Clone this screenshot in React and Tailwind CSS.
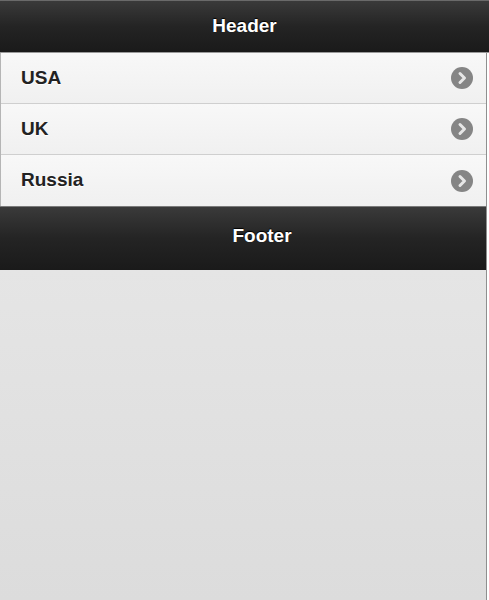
import { useState } from 'react';

const countries = ['USA', 'UK', 'Russia'];

function ArrowIcon() {
  return (
    <svg width="22" height="22" viewBox="0 0 22 22">
      <circle cx="11" cy="11" r="11" fill="#858585" />
      <path d="M9 6.5 L13.5 11 L9 15.5" fill="none" stroke="#e6e6e6" strokeWidth="3" strokeLinecap="round" strokeLinejoin="round" />
    </svg>
  );
}

export default function App() {
  const [selected, setSelected] = useState(null);

  return (
    <div className="min-h-[600px] w-full flex flex-col font-['Liberation_Sans',Arial,sans-serif]">
      <header className="h-[53px] flex items-center justify-center border-t border-[#6a6a6a] border-b border-b-[#9a9a9a] bg-gradient-to-b from-[#3a3a3a] via-[#242424] to-[#1a1a1a]">
        <h1 className="text-[19px] font-bold text-white [text-shadow:0_-1px_1px_#000]">Header</h1>
      </header>
      <div className="flex-1 flex flex-col w-[487px] border-r border-[#8f8f8f] bg-gradient-to-b from-[#ebebeb] to-[#dcdcdc]">
        <ul className="border-l border-[#b5b5b5]">
          {countries.map((c) => (
            <li
              key={c}
              onClick={() => setSelected(c)}
              className={`h-[51px] flex items-center justify-between pl-[20px] pr-[13px] border-b border-[#cfcfcf] last:border-b-0 cursor-pointer ${
                selected === c ? 'bg-[#dfe9f3]' : 'bg-gradient-to-b from-[#f8f8f8] to-[#f0f0f0]'
              }`}
            >
              <span className="text-[19px] font-bold text-[#222] [text-shadow:0_1px_0_#fff]">{c}</span>
              <ArrowIcon />
            </li>
          ))}
        </ul>
        <footer className="h-[64px] flex items-center justify-center pl-[38px] pb-[4px] border-t border-[#7a7a7a] bg-gradient-to-b from-[#3a3a3a] via-[#242424] to-[#1a1a1a]">
          <span className="text-[19px] font-bold text-white [text-shadow:0_-1px_1px_#000]">Footer</span>
        </footer>
      </div>
    </div>
  );
}
